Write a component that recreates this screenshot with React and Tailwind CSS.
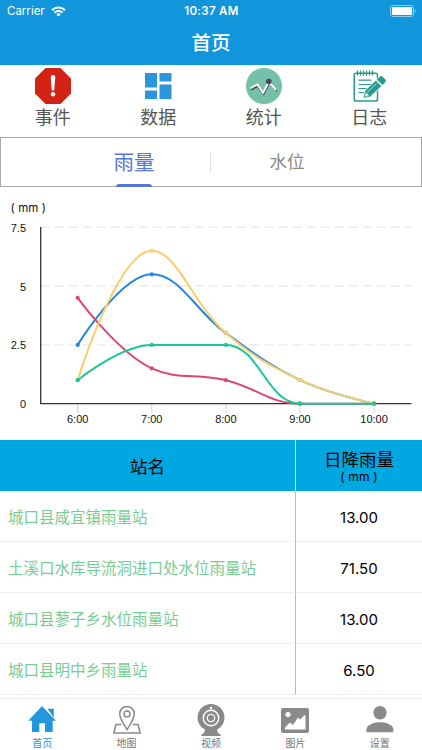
import React, { useState } from "react";

const FONT = "font-['Inter','Noto_Sans_CJK_SC',sans-serif]";

const AlertIcon = () => (
  <svg viewBox="0 0 36 36" className="h-9 w-9">
    <path d="M10.500 0h15L36 10.500v15L25.500 36h-15L0 25.500v-15z" fill="#d32314" />
    <path d="M15.700 9.300a2.300 2.300 0 0 1 4.600 0L19.200 22.500h-2.400z" fill="#fff" />
    <circle cx="18" cy="26.200" r="2.200" fill="#fff" />
  </svg>
);

const DataIcon = () => (
  <svg viewBox="0 0 36 36" className="h-9 w-9" fill="#2c96dc">
    <path d="M5 5h12v14.500H5zM19.500 5h12v8.500h-12zM5 22.500h12V31H5zM19.500 16.500h12V31h-12z" />
  </svg>
);

const StatsIcon = () => (
  <svg viewBox="0 0 36 36" className="h-9 w-9" fill="none" strokeLinejoin="round">
    <circle cx="18" cy="18" r="18" fill="#76bfa8" />
    <path d="M5 21.700l6.500-3.500 6 8.200 5.800-11.200 7.700 8" stroke="#3e4858" strokeWidth="1.600" />
    <path d="M4.500 20.300l6.800-4 5.700 8.700 5.700-11 7.500 8" stroke="#fff" strokeWidth="1.900" />
    <circle cx="22.800" cy="13.500" r="2.800" fill="#45495a" />
  </svg>
);

const LogIcon = () => (
  <svg viewBox="0 0 36 36" className="h-9 w-9" fill="none" stroke="#2b9a8d" strokeLinecap="round">
    <rect x="3.200" y="5.200" width="23.300" height="27.800" rx="1.800" strokeWidth="1.500" />
    <path d="M6.500 3v4M9.500 3v4M12.500 3v4M15.500 3v4M18.500 3v4M21.500 3v4" strokeWidth="1.300" />
    <path d="M8 12.200h12M8 16.500h11.500M8 20.500h8M8 24.500h5" strokeWidth="1.200" />
    <g transform="translate(12 30.300) rotate(-44)" stroke="#fff" strokeWidth=".9">
      <path d="M0 0L6.500-4.200H22V4.200H6.500z" fill="#2b9a8d" />
      <path d="M23-4.200H27.500a2 2 0 0 1 2 2v4.400a2 2 0 0 1-2 2H23z" fill="#2b9a8d" />
      <path d="M7.500-1.300H20" strokeWidth=".6" />
      <path d="M2.800 0L6-1.700V1.700z" fill="#fff" strokeWidth=".3" />
    </g>
  </svg>
);

const HomeIcon = () => (
  <svg viewBox="0 0 28 28" className="h-7 w-7" fill="#2496dc">
    <path d="M14 0L.3 14.800H4V26h7.300v-8.700h5.700V26h7.700V14.800H28z" />
    <path d="M19.500 2.700h6.300v8.800z" />
  </svg>
);

const MapIcon = () => (
  <svg viewBox="0 0 28 28" className="h-7 w-7" fill="none" stroke="#8a8a8a" strokeWidth="1.500">
    <path d="M14 23.500C10.500 18 6.700 12.800 6.700 7.800a7.300 7.300 0 0 1 14.600 0C21.300 12.800 17.500 18 14 23.500z" />
    <circle cx="14" cy="8" r="3" />
    <path d="M8.300 18.500H3L.8 27h26.400L25 18.500h-5.300" />
  </svg>
);

const VideoIcon = () => (
  <svg viewBox="0 0 28 34" className="h-[34px] w-7">
    <path d="M5.500 25a13.500 13.500 0 1 1 17 0l-2.500 1.500q0 2 2 4.500h1.200l.8 2H4l.8-2H6q2-2.500 2-4.500z" fill="#8a8a8a" />
    <circle cx="14" cy="15" r="7.700" fill="none" stroke="#fff" strokeWidth="1.500" />
    <circle cx="14" cy="15" r="3.700" fill="none" stroke="#fff" strokeWidth="1.300" />
    <circle cx="14" cy="5" r="1.200" fill="#fff" />
  </svg>
);

const PictureIcon = () => (
  <svg viewBox="0 0 28 25" className="h-[25px] w-7">
    <rect width="28" height="25" rx="2" fill="#8a8a8a" />
    <circle cx="7" cy="6.500" r="2.600" fill="#fff" />
    <path d="M4 21.500v-2l5-5 3 2.500 5-7.500 2 2L23.500 7l1 .8v13.700z" fill="#fff" />
  </svg>
);

const SettingIcon = () => (
  <svg viewBox="0 0 28 28" className="h-7 w-7" fill="#8a8a8a">
    <circle cx="14" cy="6.700" r="6.700" />
    <path d="M.5 26.300v-3C.7 19 7.500 16.300 14 16.300s13.100 2.700 13.300 7v3z" />
  </svg>
);

const shortcuts = [
  { label: "事件", Icon: AlertIcon },
  { label: "数据", Icon: DataIcon },
  { label: "统计", Icon: StatsIcon },
  { label: "日志", Icon: LogIcon },
];

const stations = [
  { name: "城口县咸宜镇雨量站", value: "13.00" },
  { name: "土溪口水库导流洞进口处水位雨量站", value: "71.50" },
  { name: "城口县蓼子乡水位雨量站", value: "13.00" },
  { name: "城口县明中乡雨量站", value: "6.50" },
];

const tabs = [
  { label: "首页", Icon: HomeIcon },
  { label: "地图", Icon: MapIcon },
  { label: "视频", Icon: VideoIcon },
  { label: "图片", Icon: PictureIcon },
  { label: "设置", Icon: SettingIcon },
];

const hours = ["6:00", "7:00", "8:00", "9:00", "10:00"];
const series = [
  { color: "#2385e4", values: [2.5, 5.5, 3, 1, 0] },
  { color: "#d94a70", values: [4.5, 1.5, 1, 0, 0] },
  { color: "#f9cf6b", values: [1, 6.5, 3, 1, 0] },
  { color: "#1cc596", values: [1, 2.5, 2.5, 0, 0] },
];

const STEP = 74.1;
const SMOOTH = 0.4;
const toX = (i) => 77.7 + i * STEP;
const toY = (v) => 213.7 - v * 23.53;

const clamp = (v, a, b) => Math.max(Math.min(a, b), Math.min(v, Math.max(a, b)));

// smooth line whose handles stay between neighbouring points, so it never overshoots
function curve(values) {
  const y = values.map(toY);
  const n = y.length - 1;
  const handles = y.map((v, i) => {
    if (i === 0 || i === n) return { inX: 0, inY: 0, outX: 0, outY: 0 };
    const prev = Math.hypot(STEP, v - y[i - 1]);
    const next = Math.hypot(STEP, y[i + 1] - v);
    const k = (SMOOTH * next) / (prev + next);
    const out = clamp((y[i + 1] - y[i - 1]) * k, 0, y[i + 1] - v);
    const inY = clamp((out * prev) / next, 0, v - y[i - 1]);
    const outX = 2 * STEP * k;
    return { inX: (outX * prev) / next, inY, outX, outY: (inY * next) / prev };
  });
  let path = `M${toX(0)} ${y[0]}`;
  for (let i = 0; i < n; i++) {
    const a = handles[i];
    const b = handles[i + 1];
    path += `C${toX(i) + a.outX} ${y[i] + a.outY} ${toX(i + 1) - b.inX} ${y[i + 1] - b.inY} ${toX(i + 1)} ${y[i + 1]}`;
  }
  return path;
}

const RainChart = () => (
  <svg viewBox="0 0 422 250" className="block h-[250px] w-full" fontFamily="Liberation Sans, sans-serif" fontSize="11" fill="#111">
    <text x="10.500" y="22" fontFamily="Inter, sans-serif" fontSize="11.500" textLength="35.500">( mm )</text>
    {[7.5, 5, 2.5, 0].map((v) => (
      <g key={v}>
        <text x="26" y={toY(v) + 4.5} textAnchor="end">{v}</text>
        {v > 0 && (
          <path d={`M41 ${toY(v)}H411.500`} stroke="#ececec" strokeWidth="1.400" strokeDasharray="9 5" />
        )}
      </g>
    ))}
    {hours.map((h, i) => (
      <g key={h}>
        <path d={`M${toX(i)} 214v9`} stroke="#ccd3e0" />
        <text x={toX(i)} y="232.500" textAnchor="middle">{h}</text>
      </g>
    ))}
    <path d="M40.700 37v176.700H411.500" fill="none" stroke="#333" strokeWidth="1.300" />
    {series.map(({ color, values }) => (
      <g key={color}>
        <path d={curve(values)} fill="none" stroke={color} strokeWidth="2" />
        {values.map((v, i) => (
          <circle key={i} cx={toX(i)} cy={toY(v)} r="2.100" fill={color} />
        ))}
      </g>
    ))}
  </svg>
);

const StatusBar = () => (
  <div className="grid h-[22px] grid-cols-3 items-center pl-[7px] pr-[6px] text-[11.5px] text-white">
    <div className="flex items-center gap-1.5">
      <span className="pt-0.5">Carrier</span>
      <svg viewBox="0 0 15 11" className="h-[11px] w-[15px]" fill="none" stroke="#fff" strokeWidth="2">
        <path d="M1 4.200a9.200 9.200 0 0 1 13 0M3.500 6.800a5.600 5.600 0 0 1 8 0" />
        <path d="M7.500 10.500L5.300 8.400a3.200 3.200 0 0 1 4.400 0z" fill="#fff" stroke="none" />
      </svg>
    </div>
    <span className="pt-0.5 text-center font-semibold tracking-[0.3px]">10:37 AM</span>
    <svg viewBox="0 0 26 12" className="h-3 w-[26px] justify-self-end">
      <rect x=".5" y=".5" width="23" height="11" rx="2.500" fill="none" stroke="#8accf0" />
      <rect x="2" y="2" width="20" height="8" rx="1" fill="#fff" />
      <path d="M24.700 4.200q1.300.5 1.300 1.800t-1.300 1.800z" fill="#8accf0" />
    </svg>
  </div>
);

export default function App() {
  const [active, setActive] = useState(0);

  return (
    <div className={`${FONT} flex h-[750px] w-full flex-col overflow-hidden bg-white text-black`}>
      <header className="h-[65px] shrink-0 bg-[#1296db]">
        <StatusBar />
        <h1 className="text-center text-[19.5px] leading-[42px] font-medium text-white">首页</h1>
      </header>

      <nav className="grid h-[72px] shrink-0 grid-cols-4 pt-[3px]">
        {shortcuts.map(({ label, Icon }) => (
          <button key={label} className="flex flex-col items-center">
            <Icon />
            <span className="text-[18px] leading-[27px] text-[#555]">{label}</span>
          </button>
        ))}
      </nav>

      <div className="flex h-[50px] shrink-0 items-center border border-[#aaa] pl-[57px] pr-[58px]">
        <button className="flex h-full flex-1 flex-col items-center justify-between text-[20.5px] text-[#5476dc]">
          <span className="pt-0.5 leading-[46px]">雨量</span>
          <span className="-mt-0.5 h-[3px] w-9 shrink-0 rounded-t bg-[#5476dc]" />
        </button>
        <div className="h-5 w-px bg-[#ddd]" />
        <button className="flex-1 pt-px text-[17.5px] text-[#888]">水位</button>
      </div>

      <div className="h-[253px] shrink-0 pt-[3px]">
        <RainChart />
      </div>

      <section className="shrink-0">
        <div className="flex h-[51px] bg-[#00a7e1]">
          <div className="flex w-[296px] items-center justify-center border-r border-[#b8e6f6] pt-[3px] text-[17.5px]">
            站名
          </div>
          <div className="flex flex-1 flex-col items-center justify-center pt-0.5">
            <span className="text-[17.5px] leading-[20px]">日降雨量</span>
            <span className="text-[12px] leading-[14px] tracking-[0.2px]">( mm )</span>
          </div>
        </div>
        {stations.map(({ name, value }) => (
          <div key={name} className="flex h-[51px]">
            <div className="flex w-[296px] items-center border-r border-b border-r-[#bbb] border-b-[#eee] pt-1 pl-2 text-[15.5px] text-[#78cd95]">
              {name}
            </div>
            <div className="flex flex-1 items-center justify-center border-b border-[#eee] pt-1 text-[15px]">
              {value}
            </div>
          </div>
        ))}
      </section>

      <footer className="mt-auto grid h-[52px] shrink-0 grid-cols-5 border-t border-[#eee]">
        {tabs.map(({ label, Icon }, i) => (
          <button
            key={label}
            onClick={() => setActive(i)}
            className={`flex flex-col items-center ${i === active ? "text-[#2496dc]" : "text-[#777]"}`}
          >
            <span className="flex h-9 items-center justify-center pt-1.5">
              <Icon />
            </span>
            <span className="text-[10px] leading-4">{label}</span>
          </button>
        ))}
      </footer>
    </div>
  );
}
